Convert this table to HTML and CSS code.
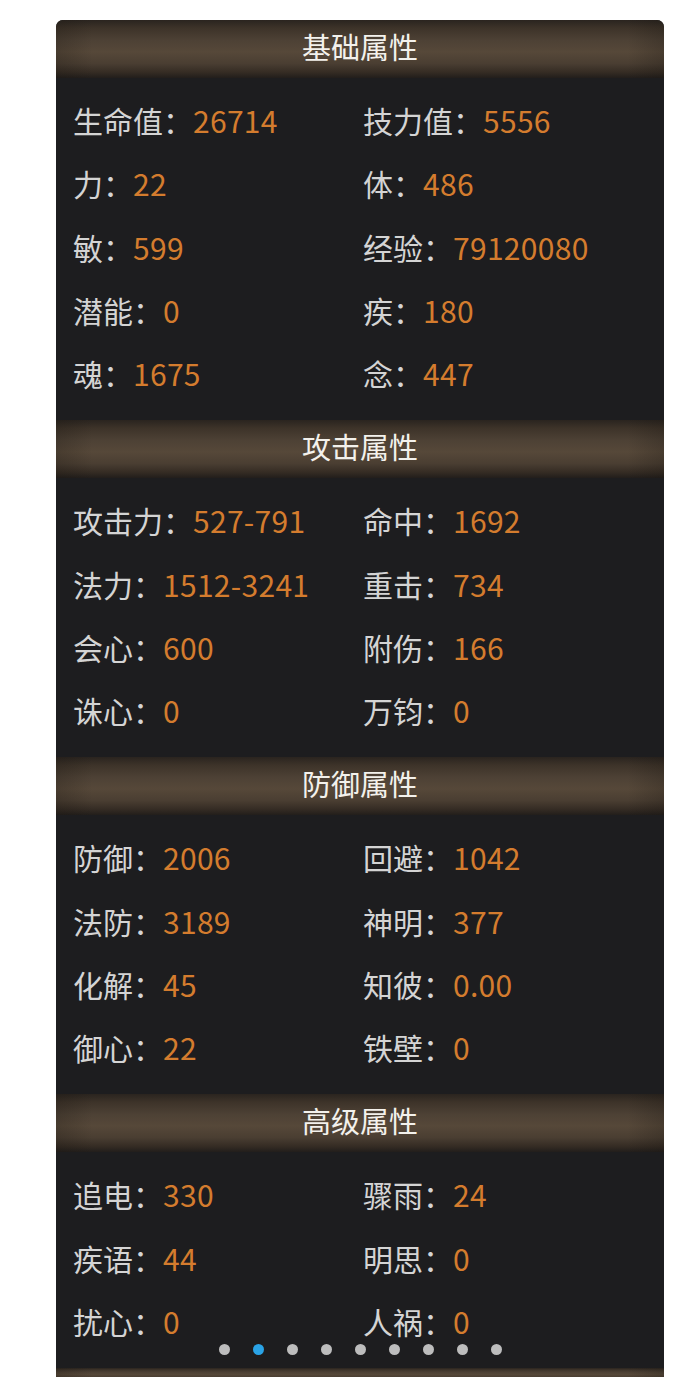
FILE: index.html
```html
<!DOCTYPE html>
<html lang="zh-CN">
<head>
<meta charset="utf-8">
<title>属性</title>
<link rel="stylesheet" href="styles.css">
</head>
<body>
<div class="panel">
  <section class="sec">
    <h2 class="head">基础属性</h2>
    <div class="grid">
      <div class="item"><span class="lab">生命值：</span><span class="val">26714</span></div>
      <div class="item"><span class="lab">技力值：</span><span class="val">5556</span></div>
      <div class="item"><span class="lab">力：</span><span class="val">22</span></div>
      <div class="item"><span class="lab">体：</span><span class="val">486</span></div>
      <div class="item"><span class="lab">敏：</span><span class="val">599</span></div>
      <div class="item"><span class="lab">经验：</span><span class="val">79120080</span></div>
      <div class="item"><span class="lab">潜能：</span><span class="val">0</span></div>
      <div class="item"><span class="lab">疾：</span><span class="val">180</span></div>
      <div class="item"><span class="lab">魂：</span><span class="val">1675</span></div>
      <div class="item"><span class="lab">念：</span><span class="val">447</span></div>
    </div>
  </section>
  <section class="sec">
    <h2 class="head">攻击属性</h2>
    <div class="grid">
      <div class="item"><span class="lab">攻击力：</span><span class="val">527-791</span></div>
      <div class="item"><span class="lab">命中：</span><span class="val">1692</span></div>
      <div class="item"><span class="lab">法力：</span><span class="val">1512-3241</span></div>
      <div class="item"><span class="lab">重击：</span><span class="val">734</span></div>
      <div class="item"><span class="lab">会心：</span><span class="val">600</span></div>
      <div class="item"><span class="lab">附伤：</span><span class="val">166</span></div>
      <div class="item"><span class="lab">诛心：</span><span class="val">0</span></div>
      <div class="item"><span class="lab">万钧：</span><span class="val">0</span></div>
    </div>
  </section>
  <section class="sec">
    <h2 class="head">防御属性</h2>
    <div class="grid">
      <div class="item"><span class="lab">防御：</span><span class="val">2006</span></div>
      <div class="item"><span class="lab">回避：</span><span class="val">1042</span></div>
      <div class="item"><span class="lab">法防：</span><span class="val">3189</span></div>
      <div class="item"><span class="lab">神明：</span><span class="val">377</span></div>
      <div class="item"><span class="lab">化解：</span><span class="val">45</span></div>
      <div class="item"><span class="lab">知彼：</span><span class="val">0.00</span></div>
      <div class="item"><span class="lab">御心：</span><span class="val">22</span></div>
      <div class="item"><span class="lab">铁壁：</span><span class="val">0</span></div>
    </div>
  </section>
  <section class="sec last">
    <h2 class="head">高级属性</h2>
    <div class="grid">
      <div class="item"><span class="lab">追电：</span><span class="val">330</span></div>
      <div class="item"><span class="lab">骤雨：</span><span class="val">24</span></div>
      <div class="item"><span class="lab">疾语：</span><span class="val">44</span></div>
      <div class="item"><span class="lab">明思：</span><span class="val">0</span></div>
      <div class="item"><span class="lab">扰心：</span><span class="val">0</span></div>
      <div class="item"><span class="lab">人祸：</span><span class="val">0</span></div>
    </div>
    <div class="dots">
      <span class="dot"></span>
      <span class="dot on"></span>
      <span class="dot"></span>
      <span class="dot"></span>
      <span class="dot"></span>
      <span class="dot"></span>
      <span class="dot"></span>
      <span class="dot"></span>
      <span class="dot"></span>
    </div>
  </section>
  <div class="head stub"></div>
</div>
</body>
</html>
```
FILE: styles.css
```css
html, body {
  margin: 0;
  padding: 0;
  background: #ffffff;
}
body {
  font-family: "Noto Sans CJK SC", "Noto Sans", sans-serif;
}
.panel {
  margin: 20px 0 0 56px;
  width: 608px;
  background: #1d1d1f;
  border-radius: 7px 7px 0 0;
  overflow: hidden;
}
.sec {
  position: relative;
}
.head {
  margin: 0;
  height: 58px;
  line-height: 52px;
  text-align: center;
  font-size: 29px;
  font-weight: 400;
  color: #f3f1ec;
  background:
    linear-gradient(90deg, rgba(20,16,12,0.22) 0%, rgba(20,16,12,0) 6%, rgba(20,16,12,0) 94%, rgba(20,16,12,0.22) 100%),
    linear-gradient(180deg, #2a241f 0%, #3d3329 14%, #4d4135 35%, #564839 55%, #4a3e32 75%, #352c24 90%, #221e1b 100%);
}
.stub {
  height: 12px;
}
.grid {
  display: grid;
  grid-template-columns: 290px 1fr;
  padding: 11px 0 15px 17px;
}
.item {
  height: 63.25px;
  line-height: 63px;
  font-size: 30px;
  white-space: nowrap;
}
.lab {
  color: #d4d4d4;
}
.val {
  color: #d47c2e;
  letter-spacing: 0.3px;
}
.dots {
  position: absolute;
  left: 0;
  right: 0;
  bottom: 13px;
  display: flex;
  justify-content: center;
  gap: 23px;
}
.dot {
  width: 11px;
  height: 11px;
  border-radius: 50%;
  background: #bdbdbd;
}
.dot.on {
  background: #2aa3e6;
}
```
